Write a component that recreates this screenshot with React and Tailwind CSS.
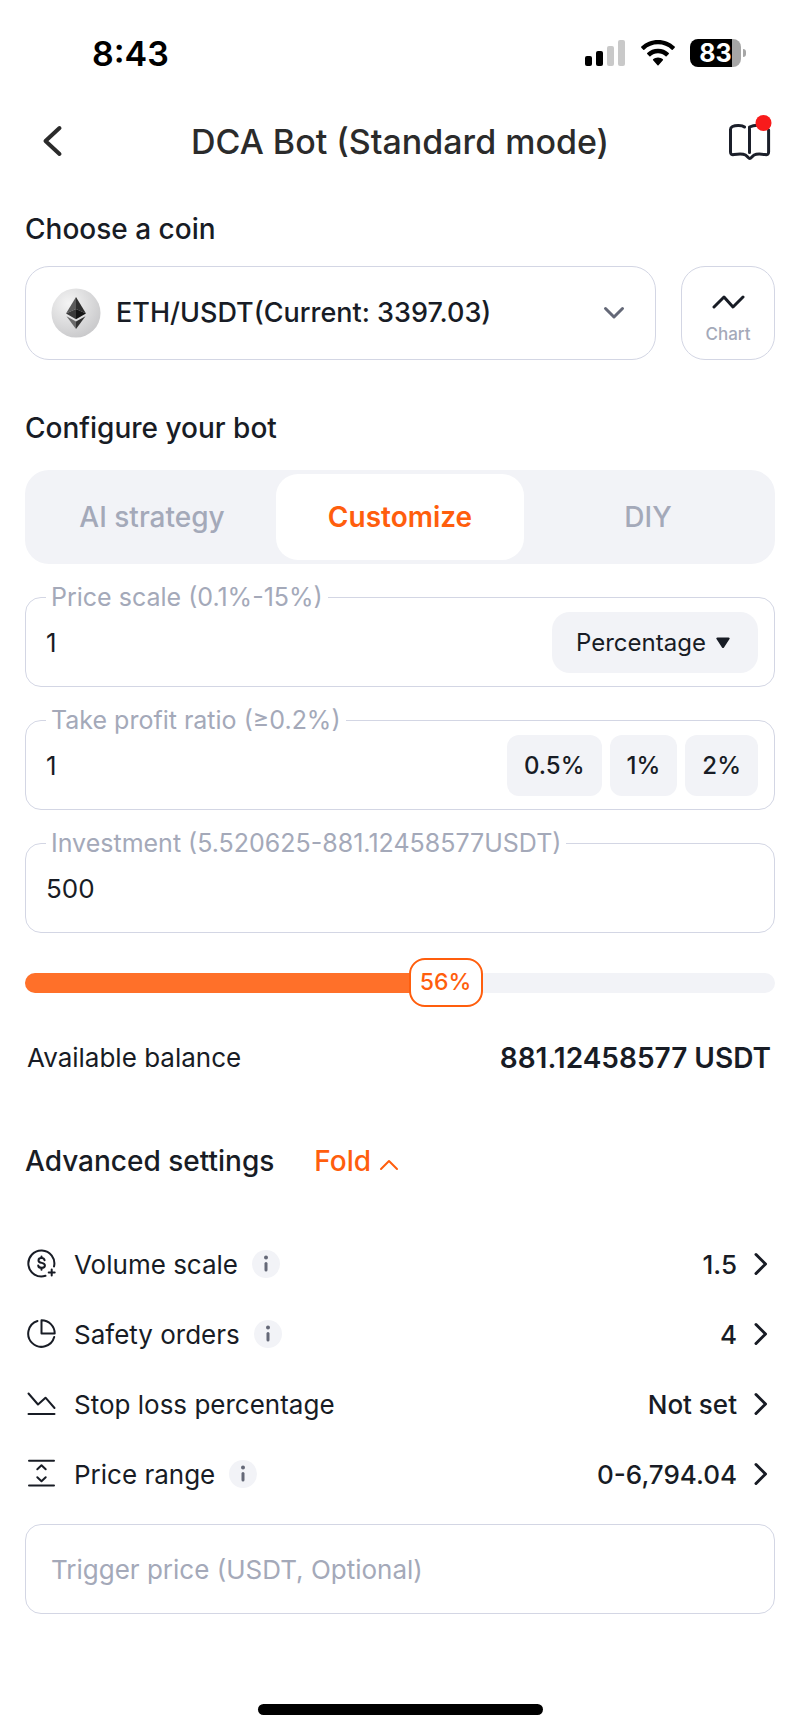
import { useState } from 'react';

const tabs = ['AI strategy', 'Customize', 'DIY'];
const profitPresets = ['0.5', '1', '2'];
const balance = 881.12458577;

const settings = [
  { label: 'Volume scale', value: '1.5', icon: VolumeIcon, info: true },
  { label: 'Safety orders', value: '4', icon: PieIcon, info: true },
  { label: 'Stop loss percentage', value: 'Not set', icon: StopLossIcon, info: false },
  { label: 'Price range', value: '0-6,794.04', icon: RangeIcon, info: true },
];

function VolumeIcon() {
  return (
    <svg width="30" height="30" viewBox="0 0 30 30" fill="none" stroke="currentColor" strokeWidth="2" strokeLinecap="round" strokeLinejoin="round">
      <path d="M18.5 26.8A13 13 0 1 1 27 17.5" />
      <path d="M17.6 11.2c-.3-1.4-1.4-2.1-3.1-2.1-1.8 0-3 .8-3 2.3 0 3.5 6.4 1.5 6.4 5 0 1.6-1.4 2.4-3.3 2.4s-3.2-.8-3.4-2.3" />
      <path d="M14.5 7.5v1.4M14.5 19v1.8M24.7 20.5v6M21.7 23.5h6" />
    </svg>
  );
}

function PieIcon() {
  return (
    <svg width="30" height="30" viewBox="0 0 30 30" fill="none" stroke="currentColor" strokeWidth="2" strokeLinecap="round" strokeLinejoin="round">
      <path d="M10.5 2A13.2 13.2 0 1 0 27.2 18" />
      <path d="M14.5 1.2v13.3h13.2A13.2 13.2 0 0 0 14.5 1.2z" />
    </svg>
  );
}

function StopLossIcon() {
  return (
    <svg width="30" height="30" viewBox="0 0 30 30" fill="none" stroke="currentColor" strokeWidth="2" strokeLinecap="round" strokeLinejoin="round">
      <path d="M1.5 4.5l9.5 11 7.5-6.8 9 10.3M1.5 25h26" />
    </svg>
  );
}

function RangeIcon() {
  return (
    <svg width="30" height="30" viewBox="0 0 30 30" fill="none" stroke="currentColor" strokeWidth="2" strokeLinecap="round" strokeLinejoin="round">
      <path d="M2 1.8h25M2 26.6h25M10.3 10.2l4.2-4 4.2 4M10.3 18.2l4.2 4 4.2-4" />
    </svg>
  );
}

function EthIcon() {
  return (
    <svg width="50" height="50" viewBox="0 0 50 50" aria-hidden="true">
      <defs>
        <radialGradient id="coin" cx="0.35" cy="0.3" r="0.8">
          <stop offset="0" stopColor="#f4f4f4" />
          <stop offset="1" stopColor="#c6c6c8" />
        </radialGradient>
      </defs>
      <circle cx="25" cy="25" r="24.5" fill="url(#coin)" />
      <path d="M25 9l-10 16.5L25 21z" fill="#5a5a5a" />
      <path d="M25 9l10 16.5L25 21z" fill="#2e2e2e" />
      <path d="M15 25.5L25 21v10.2z" fill="#3a3a3a" />
      <path d="M35 25.5L25 21v10.2z" fill="#141414" />
      <path d="M15.5 28.3L25 33.6V41z" fill="#6a6a6a" />
      <path d="M34.5 28.3L25 33.6V41z" fill="#333333" />
    </svg>
  );
}

function StatusBar() {
  return (
    <div className="flex h-[106px] items-center justify-between pr-[54px] pl-[92px] text-black">
      <span className="text-[34px] font-semibold">8:43</span>
      <div className="flex items-center">
        <svg width="40" height="26" viewBox="0 0 40 26" aria-label="Signal">
          <rect x="0" y="16" width="7" height="10" rx="2" />
          <rect x="11" y="11" width="7" height="15" rx="2" />
          <rect x="22" y="6" width="7" height="20" rx="2" fill="#c9c9c9" />
          <rect x="33" y="0" width="7" height="26" rx="2" fill="#c9c9c9" />
        </svg>
        <svg className="ml-4" width="34" height="26" viewBox="0 0 34 26" aria-label="Wi-Fi">
          <path d="M17 0C10.500 0 4.600 2.500.3 6.600c-.3.3-.3.8 0 1.100l2 2c.3.300.7.300 1 0C6.900 6.300 11.700 4.300 17 4.300s10.100 2 13.700 5.400c.3.300.7.300 1 0l2-2c.3-.300.3-.800 0-1.100C29.400 2.500 23.500 0 17 0z" />
          <path d="M17 8.700c-4.200 0-8 1.600-10.800 4.200-.3.300-.3.800 0 1.100l2.200 2.200c.3.300.7.300 1 0 2-1.800 4.700-2.900 7.600-2.900s5.600 1.100 7.600 2.900c.3.300.7.300 1 0l2.200-2.200c.3-.300.3-.800 0-1.100C25 10.300 21.200 8.700 17 8.700z" />
          <path d="M17 17.500c-1.900 0-3.600.7-4.900 1.800-.3.300-.3.700 0 1l4.400 4.900c.3.300.7.300 1 0l4.400-4.900c.3-.300.3-.700 0-1-1.300-1.100-3-1.800-4.900-1.800z" />
        </svg>
        <span className="ml-[15px] flex h-7 w-[51px] items-center justify-center rounded-lg bg-linear-to-r from-black from-83% to-[#a6a6a6] to-83% text-[25px] leading-none font-bold text-white">
          83
        </span>
        <span className="ml-0.5 h-2 w-[3px] rounded-r-full bg-[#a6a6a6]" />
      </div>
    </div>
  );
}

function Header() {
  return (
    <header className="grid h-[70px] grid-cols-[60px_1fr_60px] items-center px-[25px] text-[#2b2b2b]">
      <button type="button" aria-label="Back" className="flex h-full items-center pl-[17px]">
        <svg width="22" height="34" viewBox="0 0 22 34" fill="none" stroke="currentColor" strokeWidth="4" strokeLinecap="round" strokeLinejoin="round">
          <path d="M17.500 4L3.500 17l14 13" />
        </svg>
      </button>
      <h1 className="text-center text-[34px] font-medium whitespace-nowrap">DCA Bot (Standard mode)</h1>
      <button type="button" aria-label="Guide" className="flex h-full items-center justify-end pr-[3px]">
        <svg width="44" height="54" viewBox="0 0 44 54" fill="none" stroke="#1b1f2a" strokeWidth="3" strokeLinecap="round" strokeLinejoin="round">
          <path d="M16.500 13C14 11 7.500 11 4.500 12.500c-1.300.7-2 1.500-2 3V38c0 2.200 1.200 3 3.500 2.600 4-.7 9-.9 11.500.4 2 1.200 3 3.500 4.300 3.500s2.300-2.300 4.300-3.500c2.500-1.300 7-1.100 11-.4 2.300.4 3.500-.4 3.500-2.600V16" />
          <path d="M21.500 38.500V13c3-1.500 5.500-2 9-1.800" />
          <circle cx="35.500" cy="9" r="8" fill="#f81b1b" stroke="none" />
        </svg>
      </button>
    </header>
  );
}

function Field({ id, label, value, onChange, children }) {
  return (
    <fieldset className="rounded-2xl border border-[#d3d6e4] pr-4 pb-[13px] pl-5">
      <legend className="px-[5px] text-[25px] leading-[30px] text-[#a4a9b9]">
        <label htmlFor={id}>{label}</label>
      </legend>
      <div className="flex h-[61px] items-center gap-2">
        <input
          id={id}
          inputMode="decimal"
          value={value}
          onChange={(e) => onChange(e.target.value)}
          className="h-full min-w-0 flex-1 bg-transparent text-[26px] outline-none"
        />
        {children}
      </div>
    </fieldset>
  );
}

function InfoButton({ label }) {
  return (
    <button type="button" aria-label={`About ${label}`} className="flex size-7 items-center justify-center rounded-full bg-[#f2f3f7]">
      <svg width="6" height="18" viewBox="0 0 6 18" fill="none" stroke="#646877" strokeLinecap="round">
        <path d="M3 2.500v.01" strokeWidth="4" />
        <path d="M3 8.500v6.500" strokeWidth="3" />
      </svg>
    </button>
  );
}

function App() {
  const [tab, setTab] = useState('Customize');
  const [priceScale, setPriceScale] = useState('1');
  const [takeProfit, setTakeProfit] = useState('1');
  const [investment, setInvestment] = useState('500');
  const [open, setOpen] = useState(true);

  const share = Math.min(Math.max(Number(investment) / balance || 0, 0), 1);

  return (
    <div className="min-h-screen bg-white font-['Inter','Liberation_Sans',sans-serif] text-[#181c25]">
      <StatusBar />
      <Header />

      <main className="px-[25px] pt-[33px]">
        <h2 className="text-[28px] leading-10 font-medium">Choose a coin</h2>
        <div className="mt-[17px] flex h-[94px] gap-[25px]">
          <div className="grid flex-1 items-center rounded-3xl border border-[#d3d6e4]">
            <select
              aria-label="Coin"
              className="col-start-1 row-start-1 h-full w-full appearance-none rounded-3xl bg-transparent pr-16 pl-[90px] text-[27px] font-medium outline-none"
            >
              <option>ETH/USDT(Current: 3397.03)</option>
            </select>
            <div className="pointer-events-none col-start-1 row-start-1 flex items-center justify-between pr-[30px] pl-[25px]">
              <EthIcon />
              <svg width="22" height="14" viewBox="0 0 22 14" fill="none" stroke="#646877" strokeWidth="3" strokeLinecap="round" strokeLinejoin="round">
                <path d="M2.500 2.500L11 11l8.500-8.500" />
              </svg>
            </div>
          </div>
          <button type="button" className="flex w-[94px] flex-col items-center justify-center gap-3 rounded-3xl border border-[#d3d6e4]">
            <svg className="mt-3.5" width="34" height="16" viewBox="0 0 34 16" fill="none" stroke="currentColor" strokeWidth="3" strokeLinecap="round" strokeLinejoin="round">
              <path d="M3 13L13 3l9 10L32 3" />
            </svg>
            <span className="text-[17px] leading-6 font-medium text-[#a4a9b9]">Chart</span>
          </button>
        </div>

        <h2 className="mt-12 text-[28px] leading-10 font-medium">Configure your bot</h2>
        <div role="tablist" className="mt-[22px] grid h-[94px] grid-cols-3 rounded-3xl bg-[#f2f3f7] px-[3px] py-1">
          {tabs.map((name) => (
            <button
              key={name}
              type="button"
              role="tab"
              aria-selected={tab === name}
              onClick={() => setTab(name)}
              className={
                tab === name
                  ? 'rounded-[22px] bg-white text-[28px] font-semibold text-[#ff5e0d]'
                  : 'rounded-[22px] text-[28px] font-medium text-[#a4a9b9]'
              }
            >
              {name}
            </button>
          ))}
        </div>

        <div className="mt-[18px] flex flex-col gap-[18px]">
          <Field id="price-scale" label="Price scale (0.1%-15%)" value={priceScale} onChange={setPriceScale}>
            <div className="grid h-full w-[206px] items-center rounded-[18px] bg-[#f2f3f7]">
              <select
                aria-label="Price scale unit"
                className="col-start-1 row-start-1 h-full w-full appearance-none bg-transparent pl-6 text-[24px] outline-none"
              >
                <option>Percentage</option>
              </select>
              <svg className="pointer-events-none col-start-1 row-start-1 mr-7 justify-self-end" width="14" height="12" viewBox="0 0 14 12" fill="currentColor">
                <path d="M1.500.500h11c1 0 1.500.8 1 1.600L8 10.500c-.5.800-1.500.800-2 0L.5 2.100C0 1.300.5.500 1.500.500z" />
              </svg>
            </div>
          </Field>
          <Field id="take-profit" label="Take profit ratio (≥0.2%)" value={takeProfit} onChange={setTakeProfit}>
            {profitPresets.map((preset) => (
              <button
                key={preset}
                type="button"
                onClick={() => setTakeProfit(preset)}
                className="h-full rounded-xl bg-[#f2f3f7] px-[17px] text-[24px] font-medium"
              >
                {preset}%
              </button>
            ))}
          </Field>
          <Field id="investment" label="Investment (5.520625-881.12458577USDT)" value={investment} onChange={setInvestment} />
        </div>

        <div className="relative mt-[25px] flex h-[49px] items-center">
          <div className="h-5 w-full overflow-hidden rounded-full bg-[#f2f3f7]">
            <div className="h-full bg-[#ff7029]" style={{ width: `${share * 100}%` }} />
          </div>
          <output
            htmlFor="share"
            className="absolute flex h-full w-[74px] items-center justify-center rounded-2xl border-2 border-[#ff5e0d] bg-white text-[23px] font-medium text-[#ff5e0d]"
            style={{ left: `calc((100% - 74px) * ${share})` }}
          >
            {Math.floor(share * 100)}%
          </output>
          <input
            id="share"
            type="range"
            aria-label="Share of balance"
            min="0"
            max="100"
            value={Math.floor(share * 100)}
            onChange={(e) => setInvestment(((e.target.value / 100) * balance).toFixed(2))}
            className="absolute inset-0 h-full w-full cursor-pointer opacity-0"
          />
        </div>

        <div className="mt-[31px] flex items-center justify-between pr-1 pl-0.5 leading-10">
          <span className="text-[26px]">Available balance</span>
          <span className="text-[28px] font-semibold">{balance} USDT</span>
        </div>

        <div className="mt-[63px] flex items-center gap-10 text-[28px] leading-10 font-medium">
          <h2>Advanced settings</h2>
          <button type="button" onClick={() => setOpen(!open)} className="flex items-center gap-2 text-[#ff5e0d]">
            Fold
            <svg className="mt-2" width="20" height="12" viewBox="0 0 20 12" fill="none" stroke="currentColor" strokeWidth="2" strokeLinecap="round" strokeLinejoin="round">
              <path d="M2 10l8-8 8 8" />
            </svg>
          </button>
        </div>

        {open && (
          <>
            <ul className="mt-12">
              {settings.map(({ label, value, icon: Icon, info }) => (
                <li key={label} className="flex h-[70px] items-center pr-[7px] text-[26px]">
                  <span className="ml-0.5 w-[47px]">
                    <Icon />
                  </span>
                  <span className="mr-3.5">{label}</span>
                  {info && <InfoButton label={label} />}
                  <button type="button" aria-label={`Edit ${label}`} className="ml-auto flex items-center gap-[17px] font-medium">
                    {value}
                    <svg width="14" height="24" viewBox="0 0 14 24" fill="none" stroke="currentColor" strokeWidth="3" strokeLinecap="round" strokeLinejoin="round">
                      <path d="M2 2.500L11.500 12 2 21.500" />
                    </svg>
                  </button>
                </li>
              ))}
            </ul>
            <input
              aria-label="Trigger price"
              placeholder="Trigger price (USDT, Optional)"
              className="mt-[15px] h-[90px] w-full rounded-2xl border border-[#d3d6e4] px-[25px] text-[26px] outline-none placeholder:text-[#a4a9b9]"
            />
          </>
        )}
      </main>

      <div className="mx-auto mt-[90px] h-[11px] w-[285px] rounded-full bg-black" />
    </div>
  );
}

export default App;
